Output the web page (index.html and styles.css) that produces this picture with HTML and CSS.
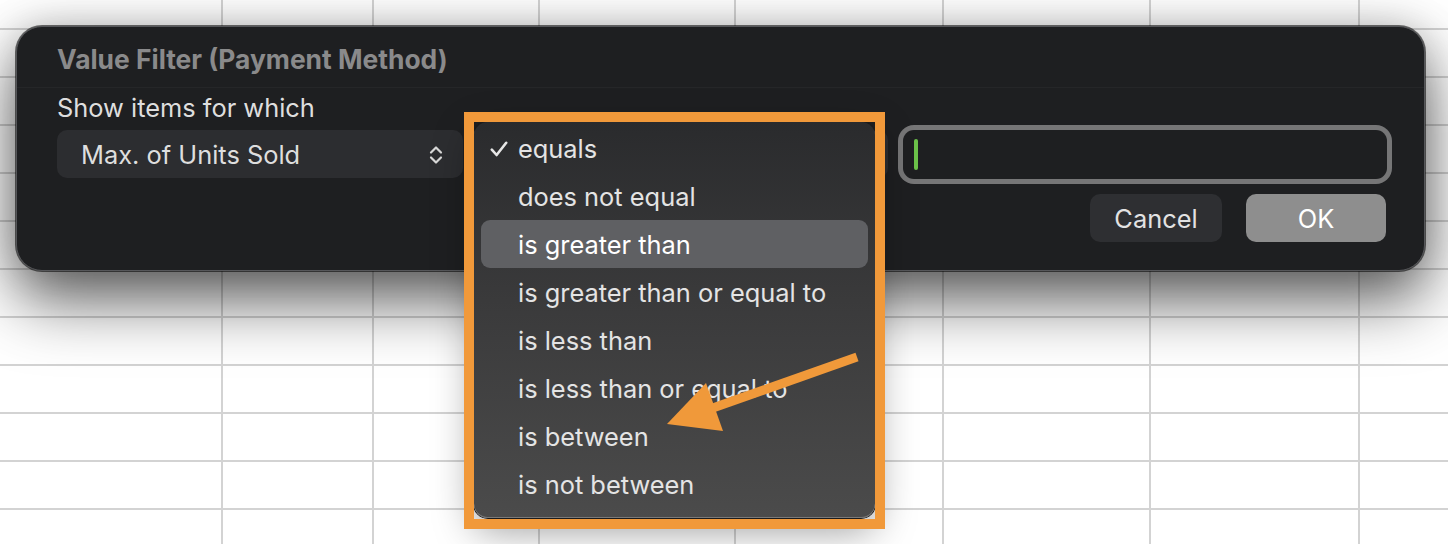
FILE: index.html
```html
<!DOCTYPE html>
<html>
<head>
<meta charset="utf-8">
<link rel="stylesheet" href="styles.css">
</head>
<body>
<div class="sheet">
  <div class="col w1"></div>
  <div class="col w2"></div>
  <div class="col w3"></div>
  <div class="col w4"></div>
  <div class="col w5"></div>
  <div class="col w6"></div>
  <div class="col w7"></div>
  <div class="col w8"></div>
</div>

<div class="dialog">
  <div class="title">Value Filter (Payment Method)</div>
  <div class="label">Show items for which</div>
  <div class="row">
    <div class="popup popup-field">
      <span>Max. of Units Sold</span>
      <svg class="updown" width="14" height="20" viewBox="0 0 14 20"><path d="M2 7.5 L7 2.5 L12 7.5 M2 12.5 L7 17.5 L12 12.5" fill="none" stroke="#d8d8d8" stroke-width="2.2" stroke-linecap="round" stroke-linejoin="round"/></svg>
    </div>
    <div class="popup popup-op"></div>
    <div class="field"><span class="caret"></span></div>
  </div>
  <div class="buttons">
    <div class="btn btn-cancel">Cancel</div>
    <div class="btn btn-ok">OK</div>
  </div>
</div>

<div class="menu">
  <div class="item"><span class="check"><svg width="18" height="16" viewBox="0 0 18 16"><path d="M1.8 8.6 L6.6 14 L16.2 1.8" fill="none" stroke="#e6e6e6" stroke-width="2.6" stroke-linecap="round" stroke-linejoin="round"/></svg></span><span>equals</span></div>
  <div class="item"><span class="check"></span><span>does not equal</span></div>
  <div class="item active"><span class="check"></span><span>is greater than</span></div>
  <div class="item"><span class="check"></span><span>is greater than or equal to</span></div>
  <div class="item"><span class="check"></span><span>is less than</span></div>
  <div class="item"><span class="check"></span><span>is less than or equal to</span></div>
  <div class="item"><span class="check"></span><span>is between</span></div>
  <div class="item"><span class="check"></span><span>is not between</span></div>
</div>

<div class="frame"></div>

<svg class="arrow" width="1448" height="544" viewBox="0 0 1448 544">
  <line x1="857" y1="357" x2="710" y2="409" stroke="#f0993a" stroke-width="9"/>
  <polygon points="667,424 706,383 723,431" fill="#f0993a"/>
</svg>
</body>
</html>
```

FILE: styles.css
```css
* { box-sizing: border-box; }
html, body {
  margin: 0;
  padding: 0;
  width: 1448px;
  height: 544px;
  overflow: hidden;
  background: #ffffff;
  font-family: "Inter", "Liberation Sans", sans-serif;
}

.sheet {
  display: flex;
  width: 1448px;
  height: 544px;
  background: repeating-linear-gradient(to bottom, #ffffff 0 28px, #d3d3d3 28px 30px, #ffffff 30px 48px);
}
.col { height: 100%; border-right: 2px solid #d3d3d3; flex: none; }
.w1 { width: 223px; }
.w2 { width: 151px; }
.w3 { width: 166px; }
.w4 { width: 196px; }
.w5 { width: 208px; }
.w6 { width: 207px; }
.w7 { width: 209px; }
.w8 { flex: 1; border-right: none; }

.dialog {
  position: absolute;
  left: 16px;
  top: 26px;
  width: 1409px;
  height: 245px;
  border-radius: 26px;
  background: #1e1f21;
  border: 1px solid #56575a;
  box-shadow: 0 0 0 1px rgba(0,0,0,0.55), 0 30px 64px rgba(0,0,0,0.62), 0 0 40px rgba(0,0,0,0.18);
  display: flex;
  flex-direction: column;
  padding: 0 37px 0 40px;
}

.title {
  height: 61px;
  padding-top: 4px;
  display: flex;
  align-items: center;
  font-weight: 700;
  font-size: 26.4px;
  color: #8a8a8b;
  margin: 0 -37px 0 -40px;
  padding-left: 40px;
  border-bottom: 1px solid #252628;
}

.label {
  height: 38px;
  display: flex;
  align-items: center;
  font-size: 25.4px;
  color: #dedede;
}

.row {
  height: 56px;
  display: flex;
  align-items: center;
}

.popup {
  height: 48px;
  border-radius: 10px;
  background: #2c2d30;
  flex: none;
}
.popup-field {
  width: 406px;
  display: flex;
  align-items: center;
  justify-content: space-between;
  padding: 0 20px 0 24px;
  font-size: 25.4px;
  color: #dedede;
}
.updown { margin-top: 1px; }
.popup-op {
  width: 415px;
  margin-left: 10px;
}

.field {
  flex: 1;
  height: 49px;
  margin-left: 15px;
  border-radius: 11px;
  background: #1e1f21;
  box-shadow: 0 0 0 5px #767677;
  display: flex;
  align-items: center;
  padding-left: 11px;
}
.caret {
  width: 4px;
  height: 31px;
  border-radius: 2px;
  background: #6cc24a;
}

.buttons {
  margin-top: 12px;
  display: flex;
  justify-content: flex-end;
  gap: 24px;
  padding-right: 1px;
}
.btn {
  height: 48px;
  border-radius: 10px;
  display: flex;
  align-items: center;
  justify-content: center;
  font-size: 25.4px;
}
.btn-cancel { width: 132px; background: #2e2f32; color: #e2e2e2; }
.btn-ok { width: 140px; background: #8e8e8e; color: #ffffff; }

.menu {
  position: absolute;
  left: 474px;
  top: 122px;
  width: 401px;
  height: 396px;
  border-radius: 14px;
  background: linear-gradient(to bottom, #2a2b2d 0%, #3a3a3b 45%, #4b4b4b 100%);
  box-shadow: inset 0 -1px 0 #7a7a7a, 0 0 0 1px #1c1c1c, 0 12px 40px rgba(0,0,0,0.4);
  padding-top: 2px;
  display: flex;
  flex-direction: column;
}
.item {
  height: 48px;
  margin: 0 7px;
  padding-left: 9px;
  border-radius: 9px;
  display: flex;
  align-items: center;
  font-size: 25.4px;
  color: #e4e4e4;
}
.item.active { background: #5f6063; color: #ffffff; }
.check {
  width: 28px;
  flex: none;
  display: flex;
  align-items: center;
  padding-top: 2px;
}

.frame {
  position: absolute;
  left: 464px;
  top: 112px;
  width: 421px;
  height: 417px;
  border: 10px solid #f1993a;
}

.arrow {
  position: absolute;
  left: 0;
  top: 0;
  pointer-events: none;
}
```
